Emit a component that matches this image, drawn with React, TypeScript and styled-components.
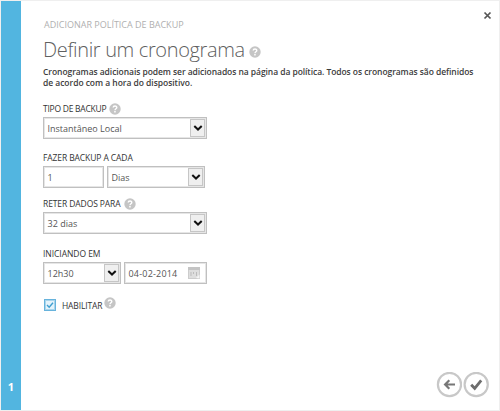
import React from 'react';
import styled, { createGlobalStyle } from 'styled-components';

const GlobalStyle = createGlobalStyle`
  * { box-sizing: border-box; }
  body { margin: 0; background: #f1f1f1; font-family: "Open Sans", "Noto Sans", sans-serif; }
`;

const Dialog = styled.main`
  display: flex;
  width: 500px;
  height: 411px;
  padding: 1px;
  background: #efefef;
`;

const StepBar = styled.aside`
  display: flex;
  flex: 0 0 20px;
  align-items: flex-end;
  justify-content: center;
  padding-bottom: 15px;
  background: #52b5e0;
  color: #fff;
  font-size: 11px;
  font-weight: 700;
  line-height: 16px;
`;

const Panel = styled.section`
  display: flex;
  flex: 1;
  flex-direction: column;
  padding: 10px 10px 12px 22px;
  background: #fff;
`;

const TopRow = styled.header`
  display: flex;
  justify-content: space-between;
  height: 24px;
`;

const Eyebrow = styled.div`
  padding: 7px 0 0 1px;
  color: #b0b0b0;
  font-size: 9px;
  line-height: 14px;
`;

const CloseButton = styled.button`
  display: flex;
  width: 9px;
  height: 9px;
  margin-right: -3px;
  padding: 0;
  border: 0;
  background: none;
`;

const TitleRow = styled.div`
  display: flex;
  align-items: center;
  gap: 4px;
  height: 30px;
`;

const Title = styled.h1`
  margin: 0;
  color: #606060;
  font-size: 20px;
  font-weight: 300;
  line-height: 30px;
  letter-spacing: -0.35px;
  white-space: nowrap;
`;

const TitleHelp = styled.span`
  display: flex;
  padding-top: 4px;
`;

const Description = styled.p`
  margin: 1px 0 0;
  height: 22px;
  color: #3c3c3c;
  font-size: 8.5px;
  font-weight: 600;
  line-height: 11px;
  white-space: nowrap;
`;

const Line = styled.span<{ $track: number }>`
  display: block;
  letter-spacing: ${(p) => p.$track}px;
`;

const Field = styled.div<{ $top: number }>`
  margin-top: ${(p) => p.$top}px;
`;

const Label = styled.div`
  display: flex;
  align-items: center;
  gap: 3px;
  height: 14px;
  color: #333;
  font-size: 8.5px;
  line-height: 14px;
  white-space: nowrap;
`;

const LabelText = styled.span<{ $track: number }>`
  letter-spacing: ${(p) => p.$track}px;
`;

const Value = styled.span<{ $track: number }>`
  padding-top: 2px;
  letter-spacing: ${(p) => p.$track}px;
`;

const Controls = styled.div`
  display: flex;
  gap: 3px;
  margin-top: 1px;
`;

const Box = styled.div<{ $width: number }>`
  display: flex;
  align-items: center;
  justify-content: space-between;
  width: ${(p) => p.$width}px;
  height: 22px;
  padding-left: 3.5px;
  border: 1px solid #c0c0c0;
  box-shadow: inset 0 0 0 1px #e6e6e6;
  background: #fff;
  color: #555;
  font-size: 9px;
  line-height: 18px;
`;

const Arrow = styled.span`
  display: flex;
  align-items: center;
  justify-content: center;
  width: 15px;
  height: 18px;
  margin-right: 1px;
  border: 1px solid #c6c6c6;
  background: #efefef;
`;

const CalendarSlot = styled.span`
  display: flex;
  margin-right: 6px;
`;

const CheckRow = styled.label`
  display: flex;
  align-items: center;
  height: 13px;
  margin-top: 14px;
  color: #333;
  font-size: 8.5px;
`;

const CheckBox = styled.span`
  display: flex;
  align-items: center;
  justify-content: center;
  width: 12px;
  height: 12px;
  margin: 0 6px 0 1px;
  border: 1.5px solid #67b3dc;
  box-shadow: inset 0 0 0 1px #a9d5ec;
  background: #e4f3fb;
`;

const CheckText = styled.span`
  padding-top: 1px;
  letter-spacing: -0.15px;
`;

const RaisedHelp = styled.span`
  display: flex;
  margin: -3px 0 0 2px;
`;

const Actions = styled.footer`
  display: flex;
  justify-content: flex-end;
  gap: 1px;
  margin-top: auto;
`;

const RoundButton = styled.button`
  display: flex;
  width: 26px;
  height: 26px;
  padding: 0;
  border: 0;
  background: none;
`;

const Help = ({ size = 12 }: { size?: number }) => (
  <svg width={size} height={size} viewBox="0 0 12 12">
    <circle cx="6" cy="6" r="5.7" fill="#c5c5c5" />
    <path d="M4.2 4.6C4.2 2.5 7.8 2.5 7.8 4.5C7.8 5.8 6 5.7 6 7.2" fill="none" stroke="#fff" strokeWidth="1.4" />
    <rect x="5.2" y="8" width="1.5" height="1.5" fill="#fff" />
  </svg>
);

const Select = ({ width, track = 0, children }: { width: number; track?: number; children: React.ReactNode }) => (
  <Box $width={width}>
    <Value $track={track}>{children}</Value>
    <Arrow>
      <svg width="10" height="7" viewBox="0 0 10 7">
        <path d="M1.3 1L5 4.5L8.7 1" fill="none" stroke="#111" strokeWidth="2" />
      </svg>
    </Arrow>
  </Box>
);

const Calendar = () => (
  <svg width="12" height="12" viewBox="0 0 12 12">
    <rect x="0.5" y="0.5" width="11" height="11" fill="#dedede" stroke="#cccccc" />
    <rect x="0" y="0" width="12" height="3" fill="#c4c4c4" />
    <path d="M3 5v4M5.5 5v2M8.5 5v4" stroke="#bbb" />
    <path d="M8 11L11.5 7.5V11.5Z" fill="#f4f4f4" />
  </svg>
);

export default function App() {
  return (
    <>
      <GlobalStyle />
      <Dialog>
        <StepBar>1</StepBar>
        <Panel>
          <TopRow>
            <Eyebrow>ADICIONAR POLÍTICA DE BACKUP</Eyebrow>
            <CloseButton aria-label="Fechar">
              <svg width="9" height="9" viewBox="0 0 9 9">
                <path d="M1.5 1.5L7.5 7.5M7.5 1.5L1.5 7.5" stroke="#555" strokeWidth="1.7" />
              </svg>
            </CloseButton>
          </TopRow>
          <TitleRow>
            <Title>Definir um cronograma</Title>
            <TitleHelp><Help /></TitleHelp>
          </TitleRow>
          <Description>
            <Line $track={-0.065}>Cronogramas adicionais podem ser adicionados na página da política. Todos os cronogramas são definidos</Line>
            <Line $track={-0.04}>de acordo com a hora do dispositivo.</Line>
          </Description>
          <Field $top={14}>
            <Label><LabelText $track={-0.25}>TIPO DE BACKUP</LabelText><Help /></Label>
            <Controls><Select width={164}>Instantâneo Local</Select></Controls>
          </Field>
          <Field $top={12}>
            <Label><LabelText $track={-0.1}>FAZER BACKUP A CADA</LabelText></Label>
            <Controls>
              <Box $width={61}><Value $track={0}>1</Value></Box>
              <Select width={98}>Dias</Select>
            </Controls>
          </Field>
          <Field $top={9}>
            <Label><LabelText $track={-0.1}>RETER DADOS PARA</LabelText><Help /></Label>
            <Controls><Select width={164}>32 dias</Select></Controls>
          </Field>
          <Field $top={13}>
            <Label><LabelText $track={-0.05}>INICIANDO EM</LabelText></Label>
            <Controls>
              <Select width={78}>12h30</Select>
              <Box $width={83}>
                <Value $track={0.2}>04-02-2014</Value>
                <CalendarSlot><Calendar /></CalendarSlot>
              </Box>
            </Controls>
          </Field>
          <CheckRow>
            <CheckBox>
              <svg width="8" height="8" viewBox="0 0 8 8">
                <path d="M1 4L3.2 6.2L7 1.8" fill="none" stroke="#3f9fd0" strokeWidth="1.4" />
              </svg>
            </CheckBox>
            <CheckText>HABILITAR</CheckText>
            <RaisedHelp><Help size={12} /></RaisedHelp>
          </CheckRow>
          <Actions>
            <RoundButton aria-label="Voltar">
              <svg width="26" height="26" viewBox="0 0 26 26">
                <circle cx="13.5" cy="12.5" r="11.6" fill="none" stroke="#c8c8c8" strokeWidth="2.2" />
                <path d="M19 12.5H9.5M13.3 8.3L9.1 12.5L13.3 16.7" fill="none" stroke="#777" strokeWidth="2.2" />
              </svg>
            </RoundButton>
            <RoundButton aria-label="Concluir">
              <svg width="26" height="26" viewBox="0 0 26 26">
                <circle cx="13.2" cy="12.5" r="11.6" fill="none" stroke="#c8c8c8" strokeWidth="2.2" />
                <path d="M8.2 12.7L11.7 16.3L18.2 8.3" fill="none" stroke="#6d6d6d" strokeWidth="2.8" />
              </svg>
            </RoundButton>
          </Actions>
        </Panel>
      </Dialog>
    </>
  );
}
